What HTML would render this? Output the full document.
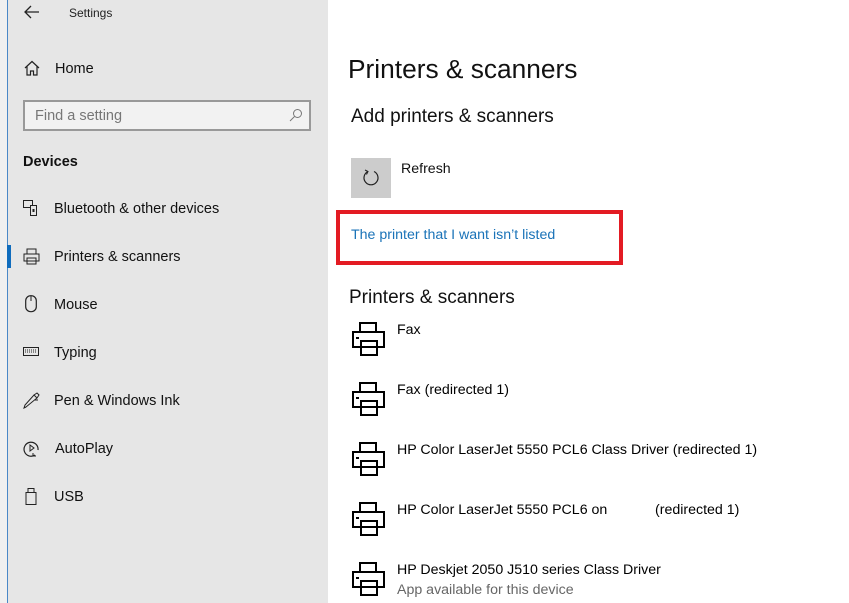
<!DOCTYPE html>
<html><head><style>
*{margin:0;padding:0;box-sizing:border-box}
body{width:849px;height:603px;overflow:hidden;background:#fff;font-family:"Liberation Sans",sans-serif;position:relative;color:#000}
.side{position:absolute;left:7px;top:0;width:321px;height:603px;background:#e6e6e6;border-left:1px solid #4a88c7}
.strip{position:absolute;left:0;top:0;width:7px;height:603px;background:#f0f0f0}
.t{position:absolute;white-space:nowrap}
.nav{font-size:14.5px;color:#111}
.r{font-size:14.2px}
svg{position:absolute}
</style></head><body>
<div class="strip"></div>
<div class="side"></div>
<svg style="left:24px;top:5px" width="16" height="14" viewBox="0 0 16 14"><path d="M15 7H2M7 1L1 7l6 6" fill="none" stroke="#222" stroke-width="1.3"/></svg>
<div class="t" style="left:69px;top:6px;font-size:12px;color:#222">Settings</div>
<svg style="left:24px;top:60px" width="16" height="16" viewBox="0 0 16 16"><path d="M1 8L8 1.5 15 8M3 6.5V15h3.5v-4h3v4H13V6.5" fill="none" stroke="#222" stroke-width="1.2"/></svg>
<div class="t nav" style="left:55px;top:61px">Home</div>
<div style="position:absolute;left:23px;top:100px;width:288px;height:31px;border:2px solid #999;background:#f2f2f2"></div>
<div class="t" style="left:35px;top:108px;font-size:14.5px;color:#777">Find a setting</div>
<svg style="left:289px;top:108px" width="14" height="14" viewBox="0 0 14 14"><circle cx="8.5" cy="5.5" r="4" fill="none" stroke="#777"/><path d="M5.5 8.5L1 13" stroke="#777"/></svg>
<div class="t" style="left:23px;top:154px;font-size:14.5px;font-weight:bold;color:#111">Devices</div>
<svg style="left:23px;top:200px" width="16" height="16" viewBox="0 0 16 16"><rect x="0.5" y="0.5" width="9" height="7" fill="none" stroke="#222"/><rect x="7.5" y="5.5" width="6" height="10" fill="#e6e6e6" stroke="#222"/><rect x="9.5" y="9" width="2" height="3" fill="#222"/></svg>
<div class="t nav" style="left:54px;top:201px">Bluetooth &amp; other devices</div>
<div style="position:absolute;left:7px;top:245px;width:4px;height:23px;background:#0f6cbd"></div>
<svg style="left:23px;top:248px" width="17" height="17" viewBox="0 0 17 17"><path d="M4 6V1h9v5M1 6h15v7H1zM4 10h9v6H4z" fill="none" stroke="#222"/></svg>
<div class="t nav" style="left:54px;top:249px">Printers &amp; scanners</div>
<svg style="left:25px;top:295px" width="12" height="18" viewBox="0 0 12 18"><rect x="0.7" y="0.7" width="10.6" height="16" rx="5" fill="none" stroke="#222" stroke-width="1.2"/><path d="M6 1v5" stroke="#222"/></svg>
<div class="t nav" style="left:54px;top:297px">Mouse</div>
<svg style="left:23px;top:347px" width="16" height="10" viewBox="0 0 16 10"><rect x="0.5" y="0.5" width="15" height="8" fill="none" stroke="#222"/><path d="M2 3h12M2 5h12" stroke="#222" stroke-dasharray="1 1"/></svg>
<div class="t nav" style="left:54px;top:345px">Typing</div>
<svg style="left:23px;top:392px" width="17" height="17" viewBox="0 0 17 17"><path d="M3 15L1 16l1-3 9-10 3 3zM11 3l3-2 2 2-2 3M12 8l3 0" fill="none" stroke="#222"/></svg>
<div class="t nav" style="left:54px;top:393px">Pen &amp; Windows Ink</div>
<svg style="left:23px;top:440px" width="17" height="17" viewBox="0 0 17 17"><path d="M12 15A7 7 0 1 1 15 10" fill="none" stroke="#222" stroke-width="1.2"/><path d="M7 5v6l4-3z" fill="none" stroke="#222"/><path d="M10 13v3h3" fill="none" stroke="#222"/></svg>
<div class="t nav" style="left:55px;top:441px">AutoPlay</div>
<svg style="left:25px;top:488px" width="12" height="17" viewBox="0 0 12 17"><rect x="3" y="0.5" width="6" height="4" fill="none" stroke="#222"/><rect x="1" y="4.5" width="10" height="12" fill="none" stroke="#222"/></svg>
<div class="t nav" style="left:54px;top:489px">USB</div>

<div class="t" style="left:348px;top:54px;font-size:26.3px;color:#111">Printers &amp; scanners</div>
<div class="t" style="left:351px;top:106px;font-size:19px;color:#111">Add printers &amp; scanners</div>
<div style="position:absolute;left:351px;top:158px;width:40px;height:40px;background:#ccc"></div>
<svg style="left:361px;top:168px" width="20" height="20" viewBox="0 0 20 20"><path d="M7 3.5A7 7 0 1 0 13 3.5" fill="none" stroke="#222" stroke-width="1.2"/><path d="M4 2l3 1.5-1.5 3" fill="none" stroke="#222"/></svg>
<div class="t r" style="left:401px;top:161px;color:#111">Refresh</div>
<div style="position:absolute;left:336px;top:210px;width:287px;height:55px;border:4px solid #e31b23"></div>
<div class="t r" style="left:351px;top:227px;color:#1a73b8">The printer that I want isn’t listed</div>
<div class="t" style="left:349px;top:287px;font-size:19px;color:#111">Printers &amp; scanners</div>
<svg style="left:352px;top:322px" width="34" height="34" viewBox="0 0 34 34"><path d="M8 10V1h16v9M1 10h31v15H1zM9 19h16v14H9zM4 16h3" fill="#fff" stroke="#000" stroke-width="2"/></svg>
<div class="t r" style="left:397px;top:322px">Fax</div>
<svg style="left:352px;top:382px" width="34" height="34" viewBox="0 0 34 34"><path d="M8 10V1h16v9M1 10h31v15H1zM9 19h16v14H9zM4 16h3" fill="#fff" stroke="#000" stroke-width="2"/></svg>
<div class="t r" style="left:397px;top:382px">Fax (redirected 1)</div>
<svg style="left:352px;top:442px" width="34" height="34" viewBox="0 0 34 34"><path d="M8 10V1h16v9M1 10h31v15H1zM9 19h16v14H9zM4 16h3" fill="#fff" stroke="#000" stroke-width="2"/></svg>
<div class="t r" style="left:397px;top:442px">HP Color LaserJet 5550 PCL6 Class Driver (redirected 1)</div>
<svg style="left:352px;top:502px" width="34" height="34" viewBox="0 0 34 34"><path d="M8 10V1h16v9M1 10h31v15H1zM9 19h16v14H9zM4 16h3" fill="#fff" stroke="#000" stroke-width="2"/></svg>
<div class="t r" style="left:397px;top:502px">HP Color LaserJet 5550 PCL6 on</div>
<div class="t r" style="left:655px;top:502px">(redirected 1)</div>
<svg style="left:352px;top:562px" width="34" height="34" viewBox="0 0 34 34"><path d="M8 10V1h16v9M1 10h31v15H1zM9 19h16v14H9zM4 16h3" fill="#fff" stroke="#000" stroke-width="2"/></svg>
<div class="t r" style="left:397px;top:562px">HP Deskjet 2050 J510 series Class Driver</div>
<div class="t r" style="left:397px;top:582px;color:#666">App available for this device</div>
</body></html>
